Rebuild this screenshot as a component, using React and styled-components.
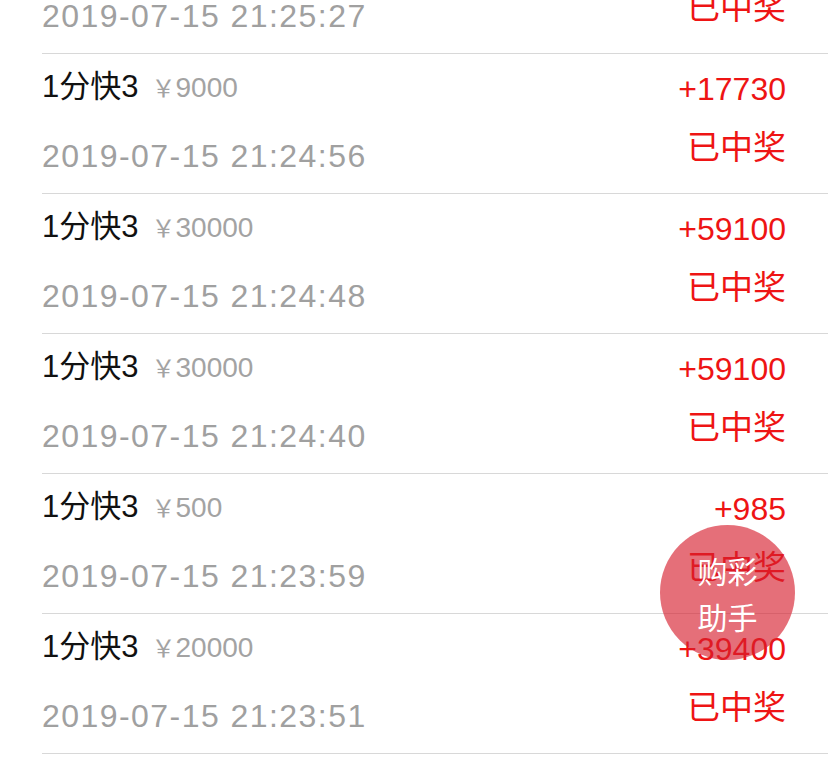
import React from "react";
import styled, { createGlobalStyle } from "styled-components";

const Global = createGlobalStyle`
  html, body { margin: 0; padding: 0; background: #fff; }
  body { overflow: hidden; font-family: "Liberation Sans", "Noto Sans CJK SC", sans-serif; }
`;

const Page = styled.div`
  position: relative;
  width: 828px;
  height: 769px;
  overflow: hidden;
  background: #fff;
`;

const List = styled.div`
  display: flex;
  flex-direction: column;
  margin-top: -86px;
`;

const Row = styled.div`
  display: flex;
  justify-content: space-between;
  height: 139px;
  margin-left: 42px;
  padding-right: 42px;
  border-bottom: 1px solid #d8d8d8;
`;

const LeftCol = styled.div`
  display: flex;
  flex-direction: column;
  padding-top: 11px;
  gap: 25px;
`;

const RightCol = styled.div`
  display: flex;
  flex-direction: column;
  align-items: flex-end;
  padding-top: 13px;
  gap: 15px;
`;

const TitleLine = styled.div`
  display: flex;
  align-items: baseline;
  height: 44px;
  line-height: 44px;
`;

const Title = styled.span`
  font-size: 31px;
  color: #111;
`;

const Bet = styled.span`
  margin-left: 13px;
  font-size: 28px;
  color: #a3a3a3;
`;

const Yen = styled.span`
  font-family: "Noto Sans CJK SC", sans-serif;
  font-size: 24px;
`;

const DateText = styled.div`
  height: 44px;
  line-height: 44px;
  font-size: 32px;
  color: #a0a0a0;
  letter-spacing: 1.45px;
`;

const RedText = styled.div`
  height: 44px;
  line-height: 44px;
  font-size: ${(p) => (p.$cjk ? "33px" : "32px")};
  color: #ee1414;
`;

const Fab = styled.div`
  position: absolute;
  left: 660px;
  top: 525px;
  width: 135px;
  height: 135px;
  border-radius: 50%;
  background: rgba(214, 30, 46, 0.64);
  color: #fff;
  font-size: 30px;
  line-height: 46px;
  display: flex;
  flex-direction: column;
  align-items: center;
  justify-content: center;
  padding-top: 7px;
  box-sizing: border-box;
`;

const rows = [
  { bet: "30000", time: "2019-07-15 21:25:27", win: "+59100" },
  { bet: "9000", time: "2019-07-15 21:24:56", win: "+17730" },
  { bet: "30000", time: "2019-07-15 21:24:48", win: "+59100" },
  { bet: "30000", time: "2019-07-15 21:24:40", win: "+59100" },
  { bet: "500", time: "2019-07-15 21:23:59", win: "+985" },
  { bet: "20000", time: "2019-07-15 21:23:51", win: "+39400" },
];

export default function App() {
  return (
    <Page>
      <Global />
      <List>
        {rows.map((r, i) => (
          <Row key={i}>
            <LeftCol>
              <TitleLine>
                <Title>1分快3</Title>
                <Bet>
                  <Yen>￥</Yen>
                  {r.bet}
                </Bet>
              </TitleLine>
              <DateText>{r.time}</DateText>
            </LeftCol>
            <RightCol>
              <RedText>{r.win}</RedText>
              <RedText $cjk>已中奖</RedText>
            </RightCol>
          </Row>
        ))}
      </List>
      <Fab>
        <span>购彩</span>
        <span>助手</span>
      </Fab>
    </Page>
  );
}
